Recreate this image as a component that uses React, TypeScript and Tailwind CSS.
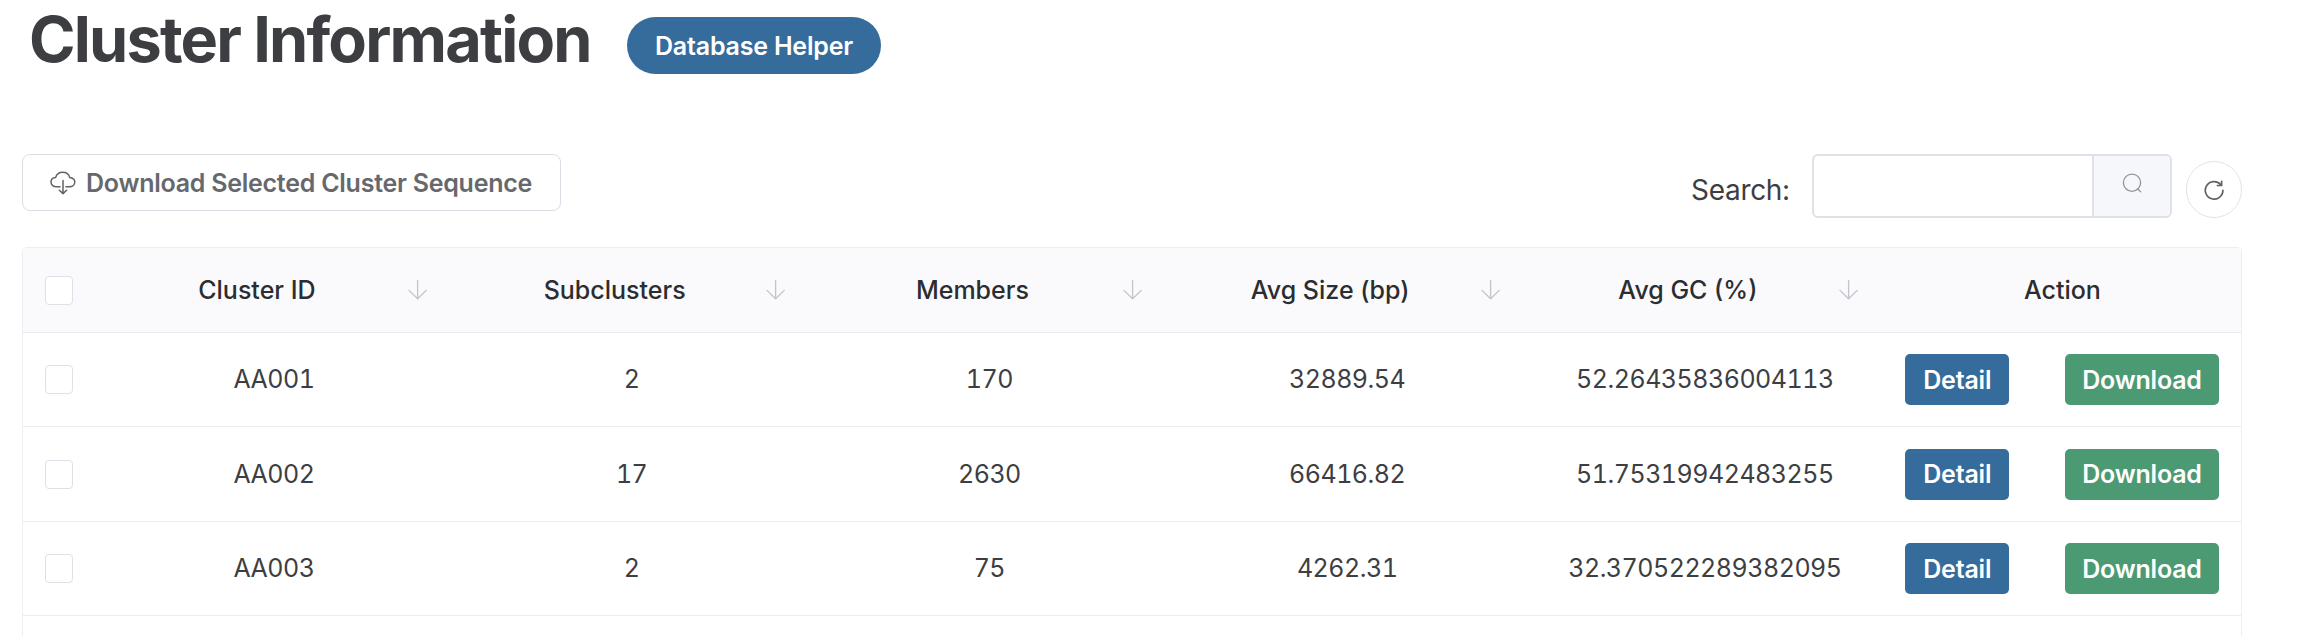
const columns = ["Cluster ID", "Subclusters", "Members", "Avg Size (bp)", "Avg GC (%)"];

const rows = [
  ["AA001", "2", "170", "32889.54", "52.26435836004113"],
  ["AA002", "17", "2630", "66416.82", "51.75319942483255"],
  ["AA003", "2", "75", "4262.31", "32.370522289382095"],
];

const grid = "grid grid-cols-[72px_repeat(5,357.75px)_1fr] items-center";

function CloudDownloadIcon() {
  return (
    <svg className="h-6 w-[26px] shrink-0" viewBox="0 0 26 24" fill="none" stroke="#606266" strokeWidth="1.5" strokeLinecap="round" strokeLinejoin="round">
      <path d="M10 15.7H6.3C3.2 15.7 1 13.6 1 11 1 8.5 3 6.6 5.7 6.4 6.5 3.3 9.2 1.2 12.7 1.2c3.5 0 6.2 2.1 7 5.2 2.9.3 5.1 2.2 5.1 4.6 0 2.7-2.3 4.7-5.3 4.7h-3.5" />
      <path d="M13 9.6v12.6M9.4 19.2 13 22.6l3.6-3.4" />
    </svg>
  );
}

function SearchIcon() {
  return (
    <svg className="h-5 w-5" viewBox="0 0 20 20" fill="none" stroke="#909399" strokeWidth="1.3" strokeLinecap="round">
      <circle cx="10" cy="9.7" r="8.6" />
      <path d="M15.8 16 18.7 18.9" />
    </svg>
  );
}

function RefreshIcon() {
  return (
    <svg className="h-5 w-5" viewBox="0 0 20 20" fill="none" stroke="#606266" strokeWidth="1.7" strokeLinecap="round" strokeLinejoin="round">
      <path d="M18.9 10.3A8.8 8.8 0 1 1 16.6 4.4" />
      <path d="M17.6 1.3V5.5H13.4" />
    </svg>
  );
}

function SortArrow() {
  return (
    <svg className="h-5 w-5 shrink-0" viewBox="0 0 20 20" fill="none" stroke="#c0c4cc" strokeWidth="1.3" strokeLinecap="round" strokeLinejoin="round">
      <path d="M9.6 .2V18.5M1 10.4 9.6 18.7l8.6-8.3" />
    </svg>
  );
}

function Checkbox() {
  return <span className="ml-[22px] block h-[29px] w-7 rounded-[4px] border border-[#dfe1e9] bg-white" />;
}

export default function App() {
  return (
    <div className="h-[636px] w-[2312px] overflow-hidden bg-white font-['Inter',sans-serif] text-[#3d3e42]">
      <header className="flex h-[154px] items-start pl-[29px]">
        <h1 className="mt-[7px] w-[598px] text-[63px] leading-[65px] font-bold tracking-[-1.82px] whitespace-nowrap">Cluster Information</h1>
        <button className="mt-[17px] h-[57px] w-[254px] rounded-full bg-[#356c9b] pt-[2px] text-[25px] font-semibold tracking-[-0.2px] whitespace-nowrap text-white">
          Database Helper
        </button>
      </header>

      <div className="flex h-[93px] items-start justify-between pr-[70px] pl-[22px]">
        <button className="flex h-[57px] w-[539px] items-center gap-[10px] rounded-[8px] border border-[#dcdee6] pl-[27px] text-[25px] font-semibold tracking-[-0.25px] whitespace-nowrap text-[#66686d]">
          <CloudDownloadIcon />
          <span className="pt-[2px]">Download Selected Cluster Sequence</span>
        </button>
        <div className="flex items-start">
          <label className="mt-[18px] w-[121px] text-[28px] leading-[36px] tracking-[-0.3px]">Search:</label>
          <div className="flex h-16 w-[360px] rounded-[6px] border-2 border-[#dfe0e8]">
            <div className="w-[278px]" />
            <div className="flex flex-1 justify-center rounded-r-[4px] border-l-2 border-[#dfe0e8] bg-[#f5f7fb] pt-[17px]">
              <SearchIcon />
            </div>
          </div>
          <button className="mt-[7px] ml-[14px] flex h-[57px] w-14 items-center justify-center rounded-full border border-[#e2e3ea]">
            <RefreshIcon />
          </button>
        </div>
      </div>

      <div className="ml-[22px] h-[420px] w-[2220px] overflow-hidden rounded-t-[5px] border border-[#eeeef2] text-[25px]">
        <div className={`${grid} h-[85px] border-b border-[#ebecf1] bg-[#fafafc] font-medium text-[#2c2d30]`}>
          <Checkbox />
          {columns.map((name) => (
            <div key={name} className="flex items-center pr-[25px]">
              <span className="flex-1 pt-[2px] pl-[11px] text-center">{name}</span>
              <SortArrow />
            </div>
          ))}
          <span className="pt-[2px] text-center">Action</span>
        </div>
        {rows.map((row) => (
          <div key={row[0]} className={`${grid} h-[94.4px] border-b border-[#ebecf1]`}>
            <Checkbox />
            {row.map((value, i) => (
              <span key={i} className="pt-px text-center tracking-[-0.5px] tabular-nums">{value}</span>
            ))}
            <div className="flex justify-between pr-[22px] pl-[21px] font-semibold tracking-[-0.2px] text-white">
              <button className="h-[51px] w-[104px] rounded-[5px] bg-[#356c9b] pt-[2px] pl-px">Detail</button>
              <button className="h-[51px] w-[154px] rounded-[5px] bg-[#4c9a73] pt-[2px]">Download</button>
            </div>
          </div>
        ))}
      </div>
    </div>
  );
}
